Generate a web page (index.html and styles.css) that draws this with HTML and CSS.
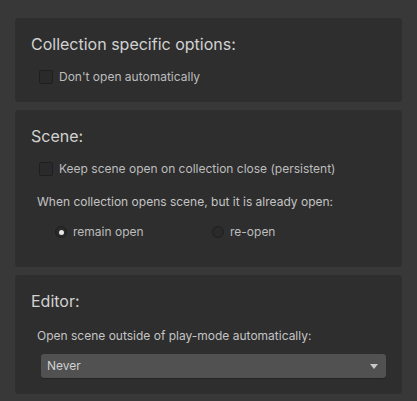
FILE: index.html
```html
<!DOCTYPE html>
<html>
<head>
<meta charset="utf-8">
<link rel="stylesheet" href="styles.css">
</head>
<body>
<div class="page">
  <section class="panel p1">
    <h2 class="title">Collection specific options:</h2>
    <label class="check-row"><span class="checkbox"></span><span class="text">Don't open automatically</span></label>
  </section>
  <section class="panel p2">
    <h2 class="title">Scene:</h2>
    <label class="check-row"><span class="checkbox"></span><span class="text">Keep scene open on collection close (persistent)</span></label>
    <div class="label when">When collection opens scene, but it is already open:</div>
    <div class="radios">
      <div class="radio-item"><span class="radio on"></span><span class="text">remain open</span></div>
      <div class="radio-item"><span class="radio"></span><span class="text">re-open</span></div>
    </div>
  </section>
  <section class="panel p3">
    <h2 class="title">Editor:</h2>
    <div class="label open">Open scene outside of play-mode automatically:</div>
    <div class="dropdown"><span class="text">Never</span><span class="arrow"></span></div>
  </section>
</div>
</body>
</html>
```

FILE: styles.css
```css
* { box-sizing: border-box; }
html, body { margin: 0; padding: 0; }
body {
  background: #383838;
  font-family: Inter, "Noto Sans", sans-serif;
  width: 417px;
  height: 401px;
  overflow: hidden;
}
.page {
  padding: 18px 15px 0 15px;
  display: flex;
  flex-direction: column;
  gap: 8px;
}
.panel {
  background: #2e2e2e;
  border-radius: 4px;
  padding: 16px 16px 0 16px;
  display: flex;
  flex-direction: column;
}
.p1 { height: 84px; }
.p2 { height: 157px; }
.p3 { height: 119px; }
.title {
  margin: 0;
  font-size: 16px;
  line-height: 20px;
  font-weight: 400;
  color: #d2d2d2;
}
.check-row {
  display: flex;
  align-items: center;
  margin: 16px 0 0 8px;
  height: 14px;
}
.checkbox {
  width: 14px;
  height: 14px;
  background: #2a2a2a;
  border: 1px solid #1f1f1f;
  border-radius: 2px;
  flex: none;
}
.text {
  font-size: 12px;
  line-height: 14px;
  color: #bdbdbd;
}
.check-row .text { margin-left: 6px; margin-top: -1px; }
.label {
  font-size: 12px;
  line-height: 14px;
  color: #c4c4c4;
  margin-left: 6px;
}
.when { margin-top: 19px; }
.radios {
  display: grid;
  grid-template-columns: 157px 157px;
  margin: 16px 0 0 24px;
}
.radio-item {
  display: flex;
  align-items: center;
  height: 14px;
}
.radio-item .text { margin-top: -1px; }
.radio {
  width: 12px;
  height: 12px;
  border-radius: 50%;
  background: #2a2a2a;
  border: 1px solid #1f1f1f;
  flex: none;
  display: flex;
  align-items: center;
  justify-content: center;
  margin-right: 6px;
}
.radio.on::after {
  content: "";
  width: 5px;
  height: 5px;
  border-radius: 50%;
  background: #e6e6e6;
}
.open { margin-top: 18px; }
.dropdown {
  margin: 11px 0 0 10px;
  height: 24px;
  width: 345px;
  background: #515151;
  border-radius: 3px;
  box-shadow: 0 1px 0 #232323;
  display: flex;
  align-items: center;
  justify-content: space-between;
  padding: 0 8px 0 6px;
}
.dropdown .text { color: #d0d0d0; }
.arrow {
  width: 0;
  height: 0;
  border-left: 4px solid transparent;
  border-right: 4px solid transparent;
  border-top: 5px solid #c8c8c8;
}
```
